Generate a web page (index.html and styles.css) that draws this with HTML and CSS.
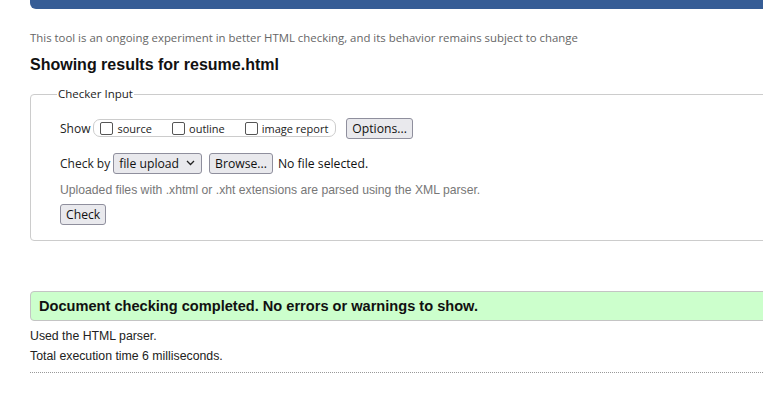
FILE: index.html
```html
<!DOCTYPE html>
<html>
<head>
<meta charset="utf-8">
<link rel="stylesheet" href="styles.css">
</head>
<body>
<div class="topbar"></div>
<div class="page">
  <p class="note">This tool is an ongoing experiment in better HTML checking, and its behavior remains subject to change</p>
  <h2 class="title">Showing results for resume.html</h2>
  <fieldset class="input">
    <legend class="legend">Checker Input</legend>
    <div class="row row-show">
      <span class="lbl">Show</span>
      <span class="group">
        <label class="opt"><span class="box"></span>source</label>
        <label class="opt"><span class="box"></span>outline</label>
        <label class="opt"><span class="box"></span>image report</label>
      </span>
      <span class="btn btn-options">Options...</span>
    </div>
    <div class="row row-by">
      <span class="lbl">Check by</span>
      <span class="btn select">file upload
        <svg class="chev" width="9" height="6" viewBox="0 0 9 6"><path d="M1 1 L4.5 4.5 L8 1" fill="none" stroke="#222" stroke-width="1.3"/></svg>
      </span>
      <span class="btn btn-browse">Browse...</span>
      <span class="nofile">No file selected.</span>
    </div>
    <p class="hint">Uploaded files with .xhtml or .xht extensions are parsed using the XML parser.</p>
    <span class="btn btn-check">Check</span>
  </fieldset>
  <div class="success">Document checking completed. No errors or warnings to show.</div>
  <div class="results">
    <p class="info">Used the HTML parser.</p>
    <p class="info">Total execution time 6 milliseconds.</p>
  </div>
  <div class="dotted"></div>
</div>
</body>
</html>
```
FILE: styles.css
```css
html, body {
  margin: 0;
  padding: 0;
  background: #fff;
}
.topbar {
  height: 9px;
  margin-left: 30px;
  background: #365d96;
  border-bottom-left-radius: 6px;
}
.page {
  padding-left: 30px;
}
.note {
  margin: 21px 0 0;
  font-family: "Open Sans", sans-serif;
  font-size: 11.4px;
  line-height: 16px;
  color: #666;
}
.title {
  margin: 9px 0 0;
  font-family: "Liberation Sans", Arial, sans-serif;
  font-size: 16px;
  font-weight: bold;
  line-height: 20px;
  color: #111;
}
.input {
  margin: 12px -10px 0 0;
  padding: 16px 0 15px 29px;
  border: 1px solid #ccc;
  border-radius: 4px;
  font-family: "Open Sans", sans-serif;
  font-size: 12px;
  color: #222;
}
.legend {
  margin-left: -3px;
  padding: 0 1px;
  font-size: 11.5px;
  line-height: 14px;
  color: #222;
}
.row {
  display: flex;
  align-items: center;
  height: 22px;
}
.row-by {
  margin-top: 13px;
}
.lbl {
  font-size: 12px;
  margin-right: 3px;
}
.group {
  display: flex;
  align-items: center;
  gap: 20px;
  height: 16px;
  padding: 0 7px 0 6px;
  border: 1px solid #ccc;
  border-radius: 7px;
}
.opt {
  display: flex;
  align-items: center;
  font-size: 11px;
  color: #222;
}
.box {
  width: 11px;
  height: 11px;
  border: 1px solid #555;
  border-radius: 2px;
  margin-right: 4px;
  background: #fff;
}
.btn {
  display: inline-flex;
  align-items: center;
  box-sizing: border-box;
  height: 21px;
  padding: 0 5px;
  border: 1px solid #8f8f9d;
  border-radius: 3px;
  background: #e9e9ed;
  font-family: "Open Sans", sans-serif;
  font-size: 12.2px;
  color: #111;
}
.btn-options {
  margin-left: 10px;
}
.select {
  padding: 0 6px 0 5px;
  gap: 7px;
}
.chev {
  display: block;
}
.btn-browse {
  margin-left: 7px;
}
.nofile {
  margin-left: 5px;
  font-size: 12.2px;
  color: #111;
}
.hint {
  margin: 8px 0 0;
  font-family: "Liberation Sans", Arial, sans-serif;
  font-size: 12.2px;
  line-height: 16px;
  color: #777;
}
.btn-check {
  margin-top: 6px;
}
.success {
  margin: 50px -10px 0 0;
  padding: 0 8px;
  height: 28px;
  line-height: 28px;
  border: 1px solid #c4c4c4;
  border-radius: 4px;
  background: #ccffcc;
  font-family: "Liberation Sans", Arial, sans-serif;
  font-size: 14.6px;
  font-weight: bold;
  color: #111;
}
.results {
  display: flex;
  flex-direction: column;
  gap: 6px;
  padding-top: 8px;
}
.info {
  margin: 0;
  font-family: "Liberation Sans", Arial, sans-serif;
  font-size: 12.3px;
  line-height: 14px;
  color: #222;
}
.dotted {
  margin-top: 9px;
  border-top: 1px dotted #999;
}
```
